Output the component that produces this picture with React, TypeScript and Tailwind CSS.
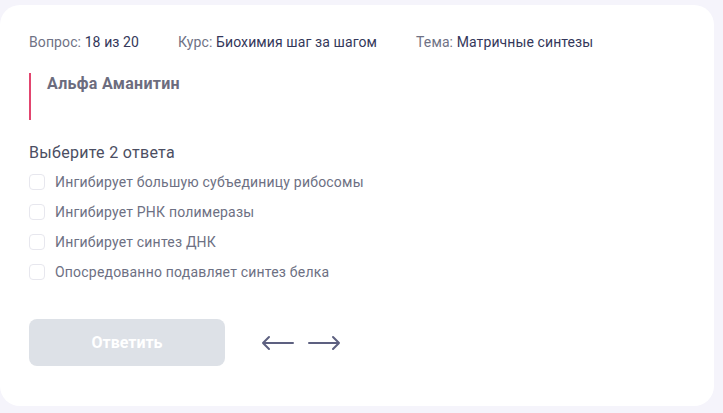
import { useState } from "react"

const options = [
  "Ингибирует большую субъединицу рибосомы",
  "Ингибирует РНК полимеразы",
  "Ингибирует синтез ДНК",
  "Опосредованно подавляет синтез белка",
]

export default function App() {
  const [checked, setChecked] = useState<number[]>([])

  const toggle = (i: number) =>
    setChecked((c) => (c.includes(i) ? c.filter((x) => x !== i) : [...c, i]))

  return (
    <div className="w-[723px] h-[413px] bg-[#f5f4fb] pt-[5px] font-['Roboto',sans-serif]">
      <div className="w-[714px] h-[401px] bg-white rounded-[20px] pl-[29px] pt-[27px]">
        <div className="flex gap-[39px] text-[14px] leading-[20px] tracking-[0.1px] text-[#6f7285]">
          <div>
            Вопрос: <span className="text-[#34375a]">18 из 20</span>
          </div>
          <div>
            Курс: <span className="text-[#34375a]">Биохимия шаг за шагом</span>
          </div>
          <div>
            Тема: <span className="text-[#34375a]">Матричные синтезы</span>
          </div>
        </div>

        <div className="mt-[21px] h-[47px] border-l-2 border-[#e2456f] pl-[16px] pt-[1px]">
          <div className="text-[16px] leading-[20px] tracking-[0.3px] font-bold text-[#6c6c7e]">Альфа Аманитин</div>
        </div>

        <div className="mt-[23px] text-[16px] leading-[20px] tracking-[0.3px] text-[#4b4e62]">Выберите 2 ответа</div>

        <div className="mt-[9px] flex flex-col gap-[10px]">
          {options.map((o, i) => (
            <label key={i} className="flex items-center gap-[10px] h-[20px] cursor-pointer">
              <span
                onClick={() => toggle(i)}
                className={
                  checked.includes(i)
                    ? "w-[16px] h-[16px] rounded-[4px] border border-[#5b5f80] bg-[#5b5f80]"
                    : "w-[16px] h-[16px] rounded-[4px] border border-[#e7e7ee] bg-white"
                }
              />
              <span className="text-[14px] tracking-[0.2px] text-[#6d7083]">{o}</span>
            </label>
          ))}
        </div>

        <div className="mt-[37px] flex items-center gap-[36px]">
          <button className="w-[196px] h-[47px] rounded-[8px] bg-[#dde1e7] text-white text-[16px] font-bold">
            Ответить
          </button>
          <div className="flex items-center gap-[14px] text-[#5d6080]">
            <svg width="33" height="16" viewBox="0 0 33 16" fill="none" stroke="currentColor" strokeWidth="2" strokeLinecap="round" strokeLinejoin="round">
              <path d="M32 8H2M8 2L2 8L8 14" />
            </svg>
            <svg width="33" height="16" viewBox="0 0 33 16" fill="none" stroke="currentColor" strokeWidth="2" strokeLinecap="round" strokeLinejoin="round">
              <path d="M1 8H31M25 2L31 8L25 14" />
            </svg>
          </div>
        </div>
      </div>
    </div>
  )
}
